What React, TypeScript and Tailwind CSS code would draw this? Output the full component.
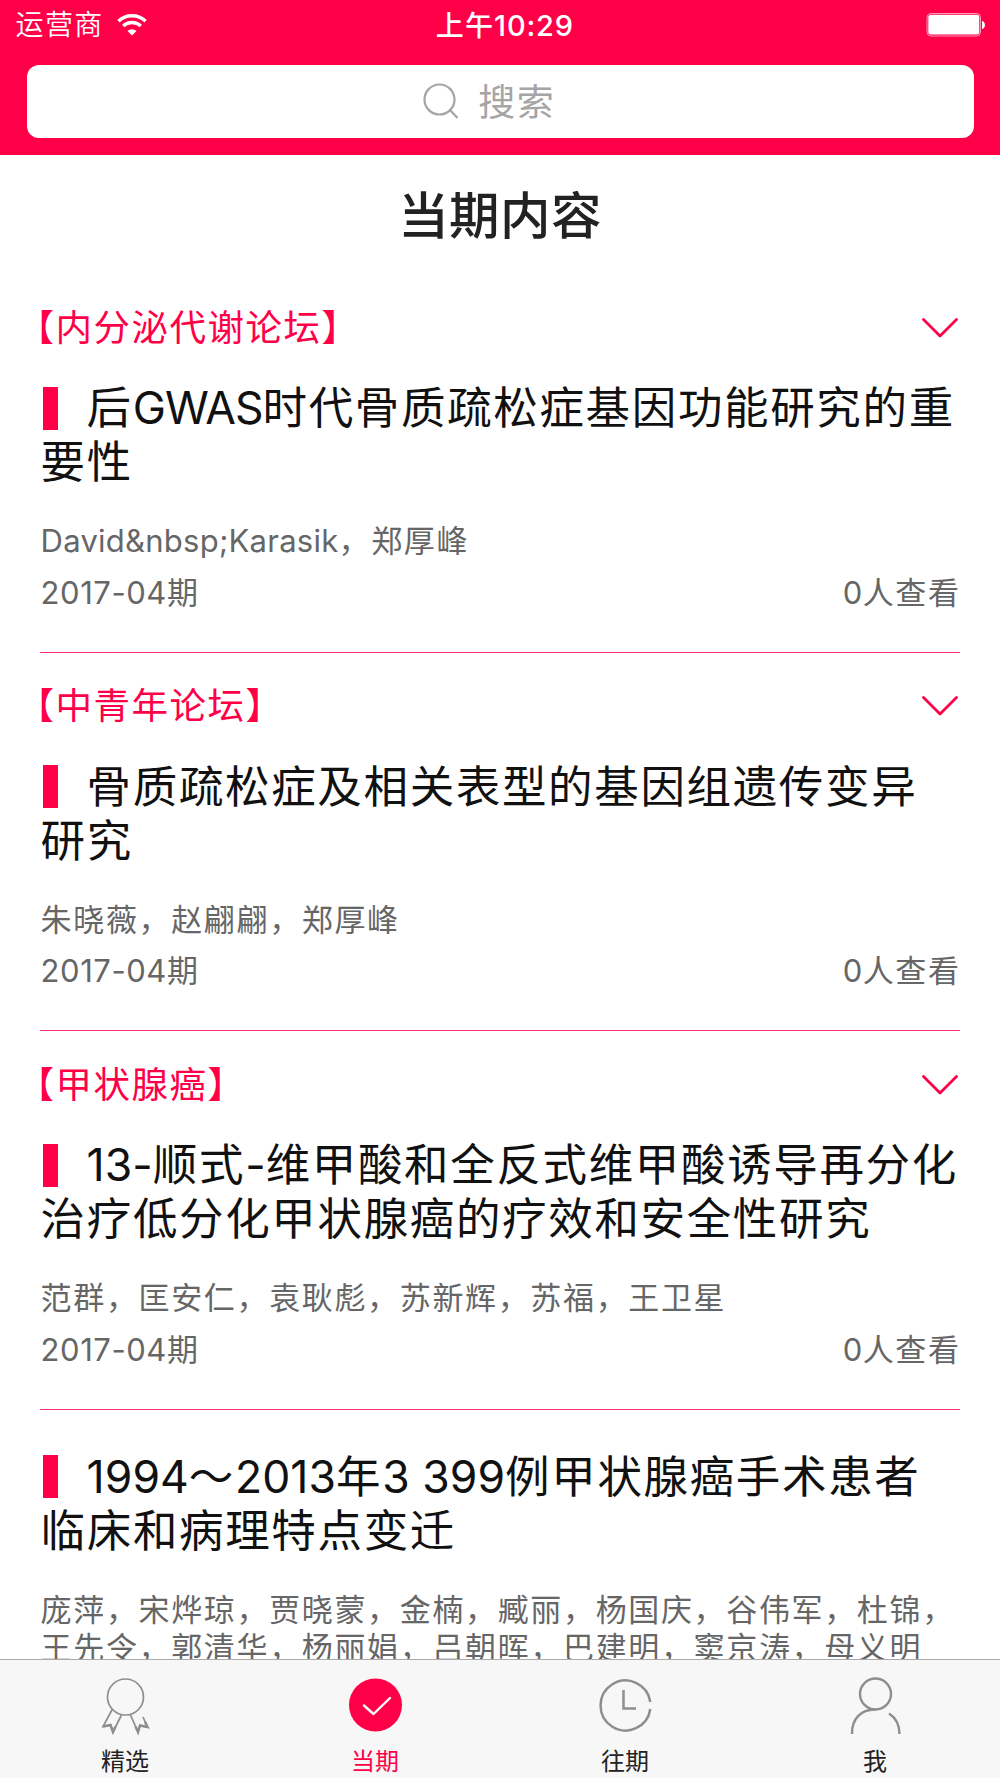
import { useState } from 'react';
import clsx from 'clsx';

type Article = {
  id: number;
  section?: string;
  title: string[];
  authors: string[];
  issue: string;
  views: number;
};

const articles: Article[] = [
  {
    id: 1,
    section: '【内分泌代谢论坛】',
    title: ['后GWAS时代骨质疏松症基因功能研究的重', '要性'],
    authors: ['David&nbsp;Karasik，郑厚峰'],
    issue: '2017-04期',
    views: 0,
  },
  {
    id: 2,
    section: '【中青年论坛】',
    title: ['骨质疏松症及相关表型的基因组遗传变异', '研究'],
    authors: ['朱晓薇，赵翩翩，郑厚峰'],
    issue: '2017-04期',
    views: 0,
  },
  {
    id: 3,
    section: '【甲状腺癌】',
    title: ['13-顺式-维甲酸和全反式维甲酸诱导再分化', '治疗低分化甲状腺癌的疗效和安全性研究'],
    authors: ['范群，匡安仁，袁耿彪，苏新辉，苏福，王卫星'],
    issue: '2017-04期',
    views: 0,
  },
  {
    id: 4,
    title: ['1994～2013年3 399例甲状腺癌手术患者', '临床和病理特点变迁'],
    authors: ['庞萍，宋烨琼，贾晓蒙，金楠，臧丽，杨国庆，谷伟军，杜锦，', '王先令，郭清华，杨丽娟，吕朝晖，巴建明，窦京涛，母义明'],
    issue: '2017-04期',
    views: 0,
  },
];

// Latin letters and digits are set tighter than the Chinese around them
function Mixed({ text, letters, digits }: { text: string; letters: string; digits: string }) {
  return (
    <>
      {text.split(/([\x20-\x7e]+)/).map((part, i) =>
        i % 2 ? <span key={i} className={/\d|-/.test(part) ? digits : letters}>{part}</span> : part
      )}
    </>
  );
}

function ArticleItem({ article }: { article: Article }) {
  return (
    <article className="whitespace-nowrap">
      {article.section ? (
        <div className="flex h-[107px] items-center justify-between pr-[42px] pl-[17.5px]">
          <h2 className="pt-[1px] text-[36.5px] leading-none tracking-[1.5px] text-[#ff0048]">{article.section}</h2>
          <svg width="36" height="20" viewBox="0 0 36 20" fill="none" stroke="#ff0048" strokeWidth="2.8" strokeLinecap="round" strokeLinejoin="round">
            <path d="M1.5 1.5 18 18 34.5 1.5" />
          </svg>
        </div>
      ) : (
        <div className="h-10" />
      )}
      <div className="mr-[40px] ml-[40px]">
        <h3 className="text-[44.5px] leading-[54px] tracking-[1.65px] text-[#111]">
          {article.title.map((line, i) => (
            <div key={line} className="flex h-[54px] items-center">
              {i === 0 && <span className="mr-[28px] ml-[3px] h-[43px] w-[15px] bg-[#ff0048]" />}
              <span className="pl-[0.6px] whitespace-pre">
                <Mixed text={line} letters="tracking-[-1px]" digits="tracking-[0.05px]" />
              </span>
            </div>
          ))}
        </h3>
        <div className="pt-[33px] pl-[0.6px] text-[31px] leading-[38px] tracking-[1.65px] text-[#666]">
          {article.authors.map(line => (
            <p key={line}>
              <Mixed text={line} letters="tracking-[0.25px]" digits="tracking-[0.5px]" />
            </p>
          ))}
        </div>
        <div className="flex justify-between pt-[13.5px] pb-[40px] pl-[0.6px] text-[31px] leading-[38px] tracking-[1.65px] text-[#666]">
          <span>
            <Mixed text={article.issue} letters="tracking-[0.25px]" digits="tracking-[0.55px]" />
          </span>
          <span className="-mr-[0.6px]">
            <Mixed text={`${article.views}人查看`} letters="tracking-[0.25px]" digits="tracking-[0.3px]" />
          </span>
        </div>
        <div className="h-px bg-[#ff0048]/80" />
      </div>
    </article>
  );
}

const tabs = [
  {
    label: '精选',
    icon: (
      <g fill="none" stroke="#8e8e8e" strokeWidth="1.7">
        <circle cx="30.5" cy="21" r="18" />
        <path d="M17.5 33 8 50.5 15.5 49 18 56 26.5 39M35.5 39 43 56 45 49.5 52.5 51 48 41" />
        <path d="M8 50.5 15.5 49 18 56 20.5 50.5M40.5 50.5 43 56 45 49.5 52.5 51 50 46" strokeWidth="2.5" />
      </g>
    ),
  },
  {
    label: '当期',
    icon: (
      <g fill="none">
        <circle cx="30.5" cy="29" r="26.5" fill="#ff0048" />
        <path d="M19 29.5 28.5 38 45 22" stroke="#fff" strokeWidth="2.4" strokeLinecap="round" strokeLinejoin="round" />
      </g>
    ),
  },
  {
    label: '往期',
    icon: (
      <g fill="none" stroke="#8e8e8e" strokeWidth="2.5">
        <path d="M55.3 26A25 25 0 1 0 55.3 33" />
        <path d="M28.5 14V32.5H41" />
      </g>
    ),
  },
  {
    label: '我',
    icon: (
      <g fill="none" stroke="#8e8e8e" strokeWidth="2.4">
        <circle cx="30.5" cy="18" r="15.5" />
        <path d="M7 58C6.5 43 16 33.5 30 33.5M44 37.5C51 42 54.5 49 54.5 58" />
      </g>
    ),
  },
];

export default function App() {
  const [active, setActive] = useState('当期');

  return (
    <div className="flex h-[1778px] w-[1000px] flex-col overflow-hidden bg-white font-['Inter','Noto_Sans_CJK_SC',sans-serif]">
      <header className="h-[154.5px] flex-shrink-0 bg-[#ff0048] text-white">
        <div className="grid h-[65px] grid-cols-3 items-start pt-[8px] text-[28px] leading-[34px]">
          <div className="flex items-center gap-[13px] pl-[15.5px]">
            <span className="font-[350] tracking-[1.4px]">运营商</span>
            <svg width="30" height="22" viewBox="0 0 30 22" fill="none" stroke="#fff" strokeWidth="3.4">
              <path d="M1.5 7.2a19.5 19.5 0 0 1 27 0M6.2 12a12.8 12.8 0 0 1 17.6 0" />
              <path d="M15 21.5 10.5 17a6.5 6.5 0 0 1 9 0z" fill="#fff" stroke="none" />
            </svg>
          </div>
          <div className="pt-[1px] pl-[9.5px] text-center font-medium">
            <span className="tracking-[1.2px]">上午</span>
            <span className="text-[29px] tracking-[0.8px]">10:29</span>
          </div>
          <div className="flex justify-end pt-[5px] pr-[14px]">
            <svg width="60" height="24" viewBox="0 0 60 24">
              <rect x="1" y="0.5" width="53.5" height="22.5" rx="4" fill="none" stroke="#fff" strokeOpacity="0.6" />
              <rect x="2.3" y="1.8" width="51" height="19.8" rx="2.5" fill="#fff" />
              <path d="M56 8a4.2 4.2 0 0 1 0 8z" fill="#fff" />
            </svg>
          </div>
        </div>
        <div className="mx-[26.5px] flex h-[73px] items-center justify-center rounded-[12px] bg-white pr-[22px] text-[#a5a5a5]">
          <svg className="mr-[19.5px] mb-[2px]" width="36" height="36" viewBox="0 0 36 36" fill="none" stroke="#a5a5a5" strokeWidth="2.2">
            <circle cx="16.5" cy="16.5" r="15" />
            <path d="m26.5 26.5 8 8.5" />
          </svg>
          <span className="pt-[2px] text-[37px] leading-none tracking-[1.4px]">搜索</span>
        </div>
      </header>

      <main className="min-h-0 flex-1 overflow-hidden">
        <h1 className="h-[119.5px] pt-[31px] text-center text-[50.5px] leading-[60px] font-medium tracking-[0.4px] text-[#222]">当期内容</h1>
        {articles.map(article => (
          <ArticleItem key={article.id} article={article} />
        ))}
      </main>

      <nav className="grid h-[119px] flex-shrink-0 grid-cols-4 border-t border-[#aaa] bg-[#f7f7f7]">
        {tabs.map(({ label, icon }) => (
          <button
            key={label}
            onClick={() => setActive(label)}
            className={clsx('flex flex-col items-center pt-[16px] text-[24px] leading-[30px]', active === label ? 'text-[#ff0048]' : 'text-[#222]')}
          >
            <svg className="mb-[11px]" width="60" height="60" viewBox="0 0 60 60">
              {icon}
            </svg>
            {label}
          </button>
        ))}
      </nav>
    </div>
  );
}
